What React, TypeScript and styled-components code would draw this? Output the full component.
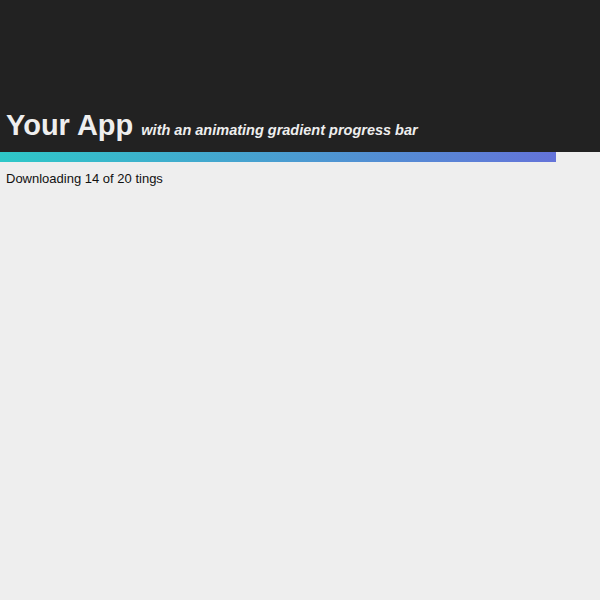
import styled, { createGlobalStyle } from 'styled-components';

const GlobalStyle = createGlobalStyle`
  body {
    margin: 0;
    background: #eeeeee;
    font-family: "Liberation Sans", Arial, sans-serif;
  }
`;

const Header = styled.header`
  background-color: #222222;
  height: 152px;
  display: flex;
  align-items: flex-end;
  padding: 0 6px 12px;
  box-sizing: border-box;
`;

const Title = styled.h1`
  margin: 0;
  font-size: 29px;
  font-weight: bold;
  color: #eeeeee;
  line-height: 1;
`;

const Subtitle = styled.small`
  font-size: 0.5em;
  font-style: italic;
`;

const Track = styled.div`
  height: 10px;
`;

const Bar = styled.div`
  height: 100%;
  background: linear-gradient(to right, #2ec8c8, #6473d9);
`;

const Status = styled.p`
  margin: 9px 6px;
  font-size: 13px;
  color: #111111;
`;

const done = 14;
const total = 20;

export default function App() {
  return (
    <>
      <GlobalStyle />
      <Header>
        <Title>
          Your App <Subtitle>with an animating gradient progress bar</Subtitle>
        </Title>
      </Header>
      <Track>
        <Bar style={{ width: `${(556 / 600) * 100}%` }} />
      </Track>
      <Status>
        Downloading {done} of {total} tings
      </Status>
    </>
  );
}
